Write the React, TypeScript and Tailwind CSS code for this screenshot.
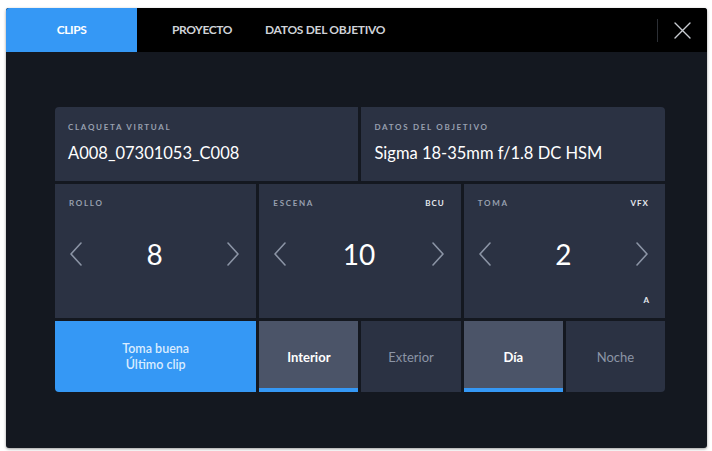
import React from 'react';

const Chevron = ({ dir }: { dir: 'left' | 'right' }) => (
  <svg width="14" height="24" viewBox="0 0 14 24" fill="none" className="shrink-0">
    <path
      d={dir === 'left' ? 'M12 1 L2 12 L12 23' : 'M2 1 L12 12 L2 23'}
      stroke="#8b94a5"
      strokeWidth="1.6"
      strokeLinecap="round"
      strokeLinejoin="round"
    />
  </svg>
);

const Label = ({ children }: { children: React.ReactNode }) => (
  <span className="text-[8px] font-bold tracking-[1.7px] uppercase text-[#98a0b0] leading-none">{children}</span>
);

const Counter = ({ label, tag, value, sub }: { label: string; tag?: string; value: string; sub?: string }) => (
  <div className="col-span-2 bg-[#2b3243] flex flex-col px-[14px] pt-[15px] pb-[12px]">
    <div className="flex justify-between items-center h-[8px]">
      <Label>{label}</Label>
      {tag && <span className="text-[8px] font-bold tracking-[1px] text-[#e6e9ef] leading-none pr-[2px]">{tag}</span>}
    </div>
    <div className="flex items-center justify-between mt-[33px] pr-[2px]">
      <Chevron dir="left" />
      <span className="text-[28px] text-white leading-none">{value}</span>
      <Chevron dir="right" />
    </div>
    <div className="flex justify-end mt-auto h-[10px]">
      {sub && <span className="text-[8px] font-bold text-[#e6e9ef] leading-none pr-[2px]">{sub}</span>}
    </div>
  </div>
);

const Toggle = ({ text, active }: { text: string; active?: boolean }) => (
  <div className={`relative flex items-center justify-center pt-[3px] ${active ? 'bg-[#4b5468]' : 'bg-[#2b3243]'}`}>
    <span className={`text-[13px] ${active ? 'text-white font-bold' : 'text-[#8c95a6]'}`}>{text}</span>
    {active && <div className="absolute left-0 right-0 bottom-0 h-[4px] bg-[#3598f5]" />}
  </div>
);

export default function App() {
  return (
    <div className="w-[712px] h-[451px] bg-white pt-[8px] pl-[6px]" style={{ fontFamily: 'Lato, "Open Sans", sans-serif' }}>
      <div className="w-[701px] h-[440px] bg-[#141820] rounded-[3px] overflow-hidden shadow-[0_1px_3px_rgba(0,0,0,0.4)]">
        {/* tab bar */}
        <div className="h-[44px] bg-black flex items-stretch">
          <div className="w-[131px] bg-[#3598f5] flex items-center justify-center">
            <span className="text-[12px] font-bold text-white tracking-[-0.4px]">CLIPS</span>
          </div>
          <div className="flex items-center pl-[35px]">
            <span className="text-[12px] font-bold text-[#cfd2d8] tracking-[-0.4px]">PROYECTO</span>
          </div>
          <div className="flex items-center pl-[33px]">
            <span className="text-[12px] font-bold text-[#cfd2d8] tracking-[-0.3px]">DATOS DEL OBJETIVO</span>
          </div>
          <div className="ml-auto flex items-center">
            <div className="w-px h-[23px] bg-[#2c2f35]" />
            <div className="w-[49px] flex items-center justify-center">
              <svg width="17" height="17" viewBox="0 0 17 17" fill="none">
                <path d="M1 1 L16 16 M16 1 L1 16" stroke="#c9ccd2" strokeWidth="1.4" strokeLinecap="round" />
              </svg>
            </div>
          </div>
        </div>

        {/* content */}
        <div className="pt-[55px] pl-[49px]">
          <div className="w-[610px] grid grid-cols-6 grid-rows-[74px_134px_71px] gap-[3px] rounded-[4px] overflow-hidden">
            <div className="col-span-3 bg-[#2b3243] flex flex-col px-[13px] pt-[16px]">
              <Label>Claqueta virtual</Label>
              <span className="text-[16.5px] text-white mt-[14px] leading-none">A008_07301053_C008</span>
            </div>
            <div className="col-span-3 bg-[#2b3243] flex flex-col px-[13px] pt-[16px]">
              <Label>Datos del objetivo</Label>
              <span className="text-[16.5px] text-white mt-[14px] leading-none">Sigma 18-35mm f/1.8 DC HSM</span>
            </div>

            <Counter label="Rollo" value="8" />
            <Counter label="Escena" tag="BCU" value="10" />
            <Counter label="Toma" tag="VFX" value="2" sub="A" />

            <div className="col-span-2 bg-[#3598f5] flex flex-col items-center justify-center leading-[16px]">
              <span className="text-[12.5px] font-semibold text-[#d9ecff]">Toma buena</span>
              <span className="text-[12.5px] font-semibold text-[#d9ecff]">Último clip</span>
            </div>
            <Toggle text="Interior" active />
            <Toggle text="Exterior" />
            <Toggle text="Día" active />
            <Toggle text="Noche" />
          </div>
        </div>
      </div>
    </div>
  );
}
